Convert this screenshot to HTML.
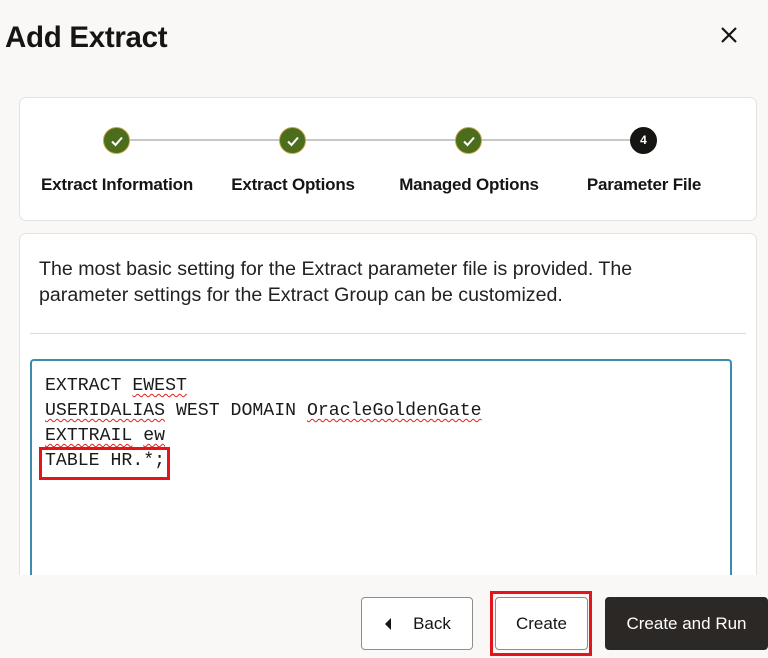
<!DOCTYPE html>
<html><head><style>
*{margin:0;padding:0;box-sizing:border-box}
body{width:768px;height:658px;overflow:hidden;background:#f9f8f6;font-family:"Liberation Sans",sans-serif;color:#161513;position:relative}
.abs{position:absolute}
h1{position:absolute;left:5px;top:21px;font-size:29.5px;font-weight:bold;letter-spacing:-0.3px}
.card{position:absolute;left:19px;width:738px;background:#fff;border:1px solid #e4e2df;border-radius:7px}
.line{position:absolute;top:139px;height:2px;background:#c9c7c4}
.dot{position:absolute;top:127px;width:27px;height:27px;border-radius:50%;background:#4b6d1c;border:1px solid #c9a64a}
.dot svg{position:absolute;left:6px;top:6px}
.lbl{position:absolute;top:175px;font-size:17px;font-weight:bold;white-space:nowrap;transform:translateX(-50%);letter-spacing:-0.2px}
.desc{position:absolute;left:39px;top:256px;font-size:19.6px;line-height:26px;color:#222;white-space:nowrap}
.ta{position:absolute;left:30px;top:359px;width:702px;height:240px;border:2px solid #3d8cb0;border-radius:4px;background:#fff;border-bottom:none}
.code{position:absolute;left:45px;top:374px;font-family:"Liberation Mono",monospace;font-size:18.2px;line-height:25px;white-space:pre;color:#1a1a1a}
.sq{text-decoration:underline wavy #e02020;text-decoration-thickness:1px;text-underline-offset:3px}
.foot{position:absolute;left:0;top:575px;width:768px;height:83px;background:#f9f8f6}
.btn{position:absolute;top:597px;height:53px;border:1px solid #8f8d8a;border-radius:4px;background:#fff;font-size:17px;display:flex;align-items:center;justify-content:center}
</style></head><body>
<h1>Add Extract</h1>
<svg class="abs" style="left:720px;top:26px" width="18" height="18" viewBox="0 0 18 18"><path d="M2 2L16 16M16 2L2 16" stroke="#161513" stroke-width="2.2"/></svg>
<div class="card" style="top:97px;height:124px"></div>
<div class="line" style="left:130px;width:500px"></div>
<div class="dot" style="left:103px"><svg width="14" height="14" viewBox="0 0 14 14"><path d="M2 7.5L5.5 11L12 3.5" stroke="#fff" stroke-width="2" fill="none"/></svg></div>
<div class="dot" style="left:279px"><svg width="14" height="14" viewBox="0 0 14 14"><path d="M2 7.5L5.5 11L12 3.5" stroke="#fff" stroke-width="2" fill="none"/></svg></div>
<div class="dot" style="left:455px"><svg width="14" height="14" viewBox="0 0 14 14"><path d="M2 7.5L5.5 11L12 3.5" stroke="#fff" stroke-width="2" fill="none"/></svg></div>
<div class="dot" style="left:630px;background:#161513;border-color:#161513;color:#fff;font-size:12px;font-weight:bold;text-align:center;line-height:25px">4</div>
<div class="lbl" style="left:117px">Extract Information</div>
<div class="lbl" style="left:293px">Extract Options</div>
<div class="lbl" style="left:469px">Managed Options</div>
<div class="lbl" style="left:644px">Parameter File</div>
<div class="card" style="top:233px;height:400px"></div>
<div class="desc">The most basic setting for the Extract parameter file is provided. The<br>parameter settings for the Extract Group can be customized.</div>
<div class="abs" style="left:30px;top:333px;width:716px;height:1px;background:#dcdad7"></div>
<div class="ta"></div>
<div class="code">EXTRACT <span class="sq">EWEST</span>
<span class="sq">USERIDALIAS</span> WEST DOMAIN <span class="sq">OracleGoldenGate</span>
<span class="sq">EXTTRAIL</span> <span class="sq">ew</span>
TABLE HR.*;</div>
<div class="abs" style="left:39px;top:447px;width:131px;height:33px;border:3px solid #e3151b"></div>
<div class="foot"></div>
<div class="btn" style="left:361px;width:112px"><svg width="10" height="14" viewBox="0 0 10 14" style="margin-right:20px"><path d="M8 1L2 7L8 13Z" fill="#161513"/></svg>Back</div>
<div class="btn" style="left:495px;width:93px">Create</div>
<div class="abs" style="left:490px;top:591px;width:102px;height:65px;border:3px solid #e3151b"></div>
<div class="btn" style="left:605px;width:163px;background:#2b2826;border-color:#2b2826;color:#fff">Create and Run</div>
</body></html>
